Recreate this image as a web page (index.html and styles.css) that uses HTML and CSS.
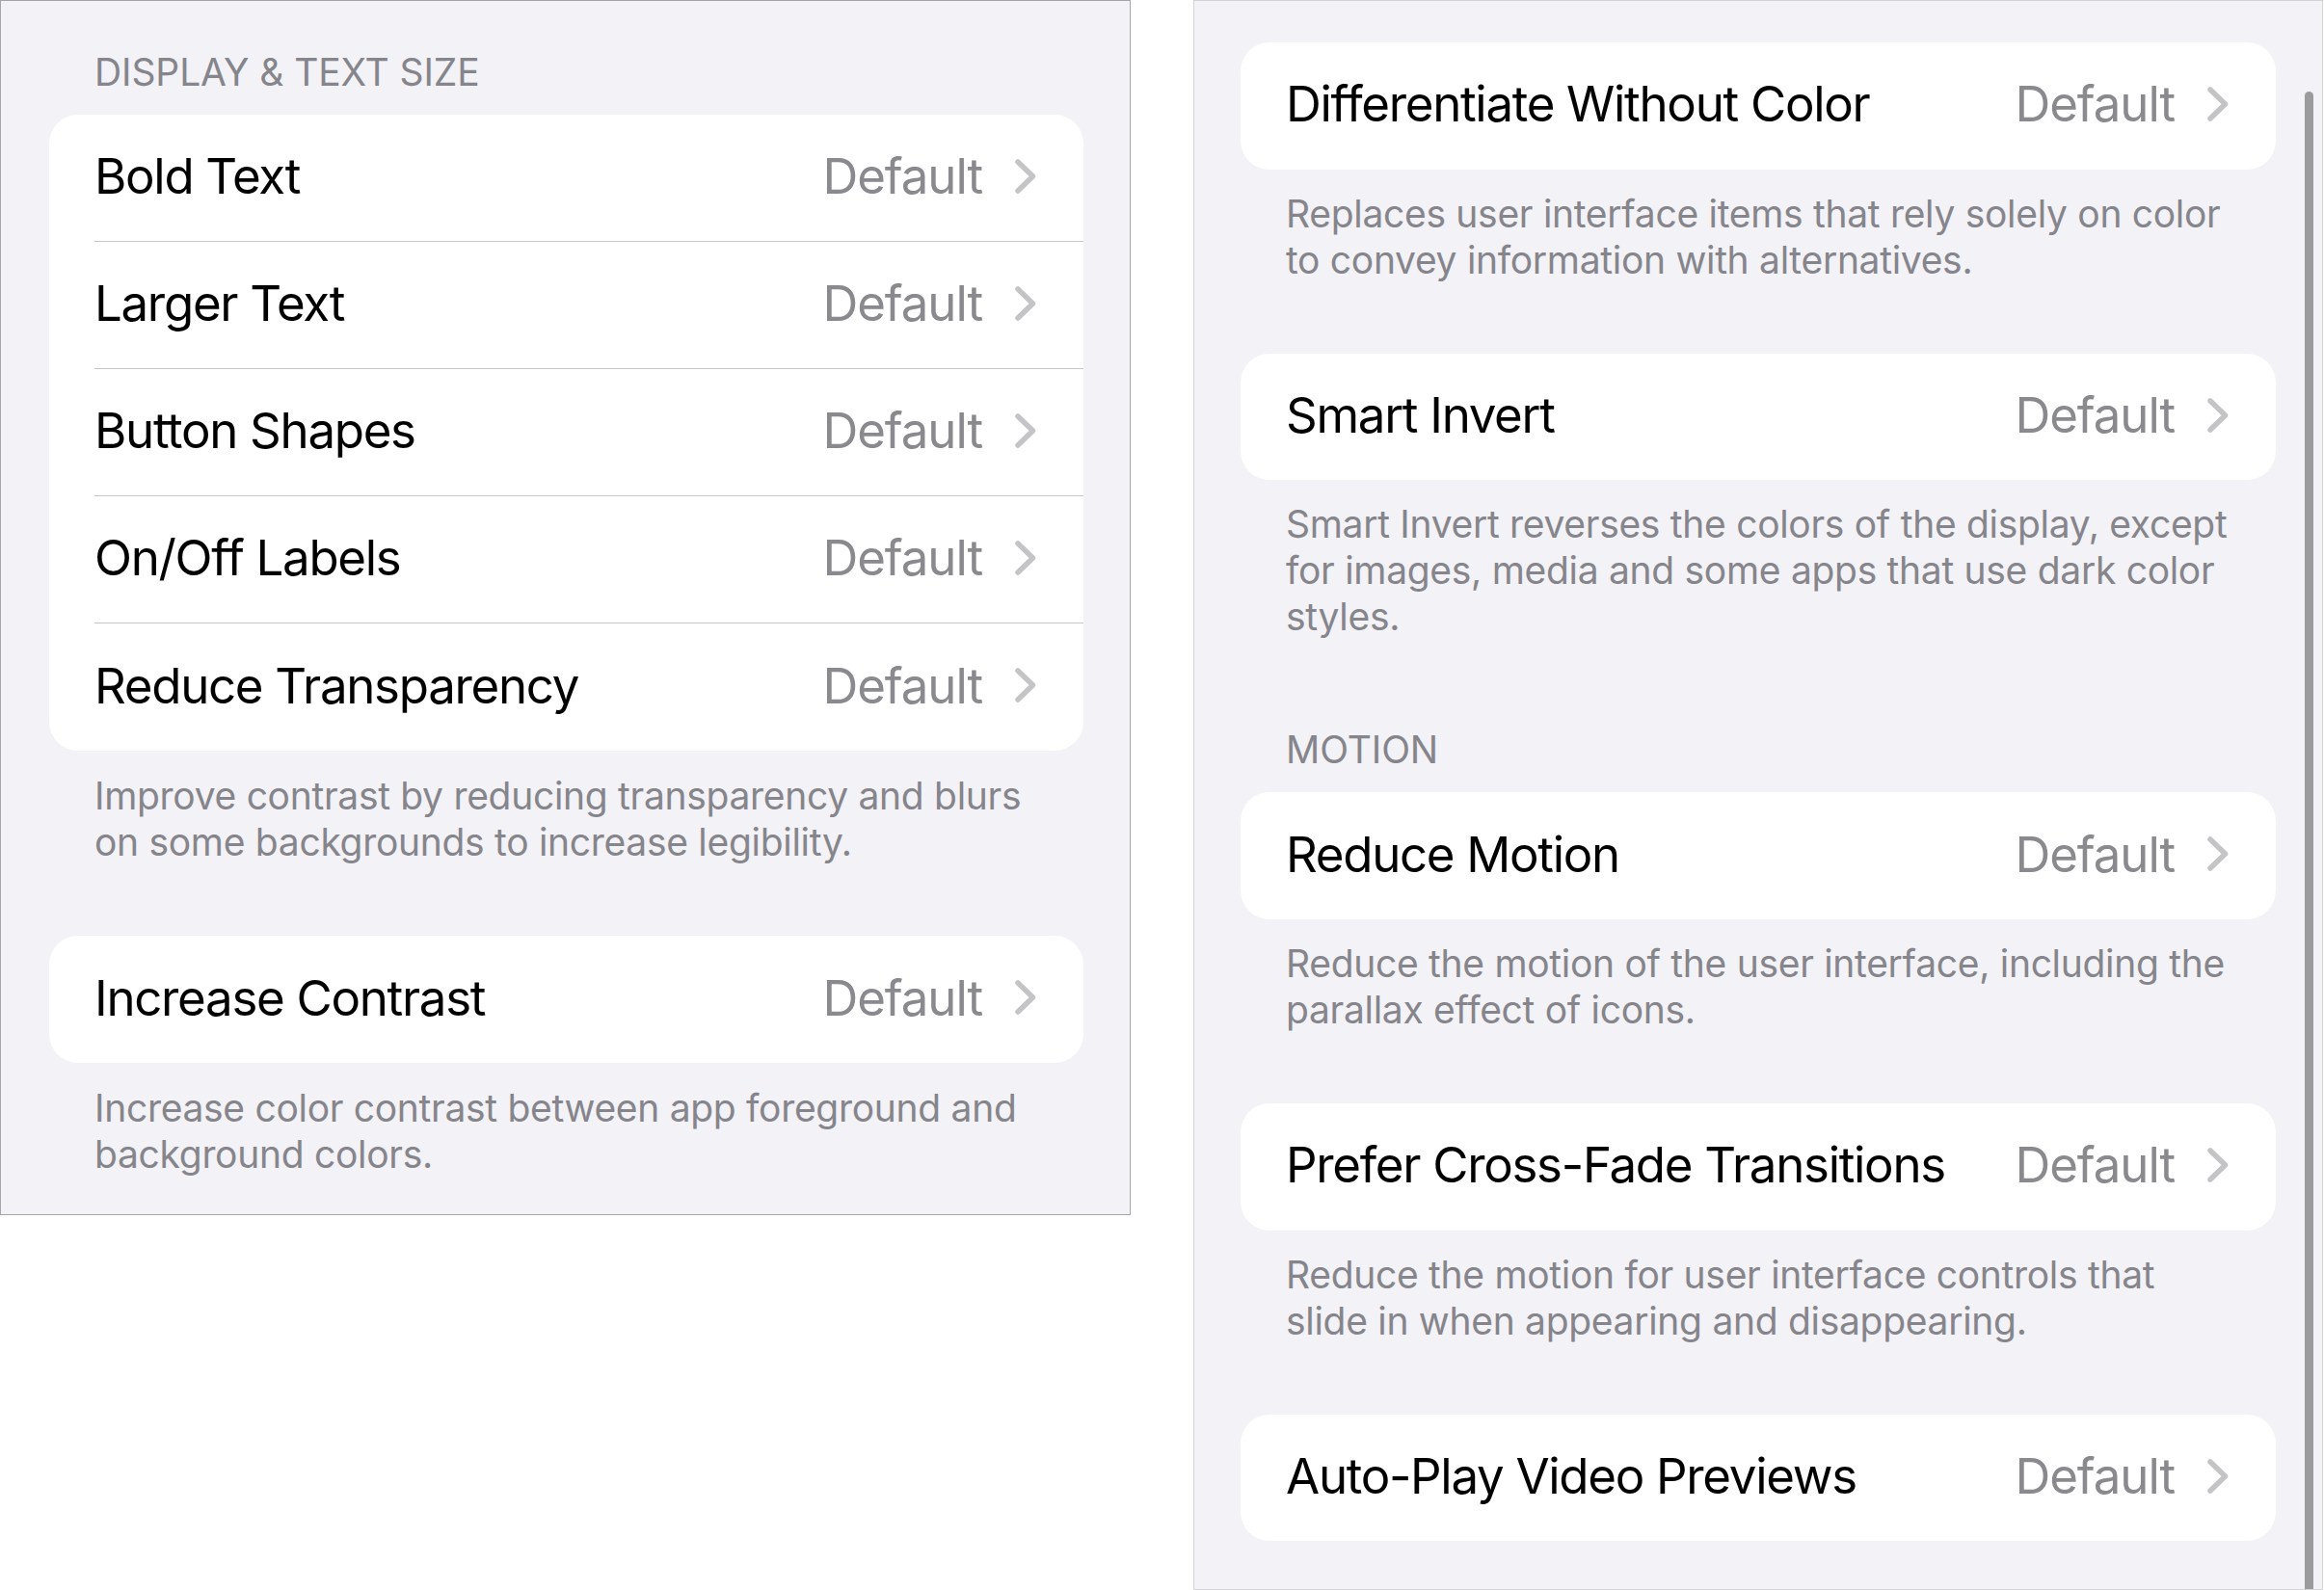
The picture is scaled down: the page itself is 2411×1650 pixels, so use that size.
FILE: index.html
```html
<!DOCTYPE html>
<html lang="en">
<head>
<meta charset="utf-8">
<title>Accessibility – Display &amp; Text Size</title>
<link rel="stylesheet" href="styles.css">
</head>
<body>
<div class="page">
  <section class="panel panel-left">
    <div class="group">
      <div class="group-header">DISPLAY &amp; TEXT SIZE</div>
      <div class="card">
        <div class="row"><div class="row-body"><span class="label">Bold Text</span><span class="value">Default</span><svg class="chev" viewBox="0 0 22 36" width="22" height="36"><path d="M3 3 L18.5 18 L3 33"/></svg></div></div>
        <div class="row"><div class="row-body"><span class="label">Larger Text</span><span class="value">Default</span><svg class="chev" viewBox="0 0 22 36" width="22" height="36"><path d="M3 3 L18.5 18 L3 33"/></svg></div></div>
        <div class="row"><div class="row-body"><span class="label">Button Shapes</span><span class="value">Default</span><svg class="chev" viewBox="0 0 22 36" width="22" height="36"><path d="M3 3 L18.5 18 L3 33"/></svg></div></div>
        <div class="row"><div class="row-body"><span class="label">On/Off Labels</span><span class="value">Default</span><svg class="chev" viewBox="0 0 22 36" width="22" height="36"><path d="M3 3 L18.5 18 L3 33"/></svg></div></div>
        <div class="row"><div class="row-body"><span class="label">Reduce Transparency</span><span class="value">Default</span><svg class="chev" viewBox="0 0 22 36" width="22" height="36"><path d="M3 3 L18.5 18 L3 33"/></svg></div></div>
      </div>
      <div class="group-footer">Improve contrast by reducing transparency and blurs<br>on some backgrounds to increase legibility.</div>
    </div>
    <div class="group">
      <div class="card">
        <div class="row"><div class="row-body"><span class="label">Increase Contrast</span><span class="value">Default</span><svg class="chev" viewBox="0 0 22 36" width="22" height="36"><path d="M3 3 L18.5 18 L3 33"/></svg></div></div>
      </div>
      <div class="group-footer">Increase color contrast between app foreground and<br>background colors.</div>
    </div>
  </section>

  <section class="panel panel-right">
    <div class="group">
      <div class="card">
        <div class="row"><div class="row-body"><span class="label">Differentiate Without Color</span><span class="value">Default</span><svg class="chev" viewBox="0 0 22 36" width="22" height="36"><path d="M3 3 L18.5 18 L3 33"/></svg></div></div>
      </div>
      <div class="group-footer">Replaces user interface items that rely solely on color<br>to convey information with alternatives.</div>
    </div>
    <div class="group">
      <div class="card">
        <div class="row"><div class="row-body"><span class="label">Smart Invert</span><span class="value">Default</span><svg class="chev" viewBox="0 0 22 36" width="22" height="36"><path d="M3 3 L18.5 18 L3 33"/></svg></div></div>
      </div>
      <div class="group-footer">Smart Invert reverses the colors of the display, except<br>for images, media and some apps that use dark color<br>styles.</div>
    </div>
    <div class="group with-header">
      <div class="group-header">MOTION</div>
      <div class="card">
        <div class="row"><div class="row-body"><span class="label">Reduce Motion</span><span class="value">Default</span><svg class="chev" viewBox="0 0 22 36" width="22" height="36"><path d="M3 3 L18.5 18 L3 33"/></svg></div></div>
      </div>
      <div class="group-footer">Reduce the motion of the user interface, including the<br>parallax effect of icons.</div>
    </div>
    <div class="group">
      <div class="card">
        <div class="row"><div class="row-body"><span class="label">Prefer Cross-Fade Transitions</span><span class="value">Default</span><svg class="chev" viewBox="0 0 22 36" width="22" height="36"><path d="M3 3 L18.5 18 L3 33"/></svg></div></div>
      </div>
      <div class="group-footer">Reduce the motion for user interface controls that<br>slide in when appearing and disappearing.</div>
    </div>
    <div class="group">
      <div class="card">
        <div class="row"><div class="row-body"><span class="label">Auto-Play Video Previews</span><span class="value">Default</span><svg class="chev" viewBox="0 0 22 36" width="22" height="36"><path d="M3 3 L18.5 18 L3 33"/></svg></div></div>
      </div>
    </div>
    <div class="scrollbar"></div>
  </section>
</div>
</body>
</html>
```

FILE: styles.css
```css
* { box-sizing: border-box; }

body {
  margin: 0;
  background: #ffffff;
  font-family: Inter, "Noto Sans", "Liberation Sans", sans-serif;
  -webkit-font-smoothing: antialiased;
}

.page {
  display: flex;
  align-items: flex-start;
  gap: 65px;
}

.panel {
  background: #f2f2f7;
}

.panel-left {
  width: 1173px;
  border: 1px solid #a5a5a5;
  padding: 50px 48px 38px 50px;
}

.panel-left .row { height: 132px; }
.panel-left .group-footer { padding-top: 23px; }

.panel-right {
  position: relative;
  width: 1172px;
  height: 1650px;
  border: 1px solid #d3d3d6;
  padding: 43px 48px 0 48px;
  overflow: hidden;
}

.group + .group { margin-top: 73px; }
.group + .group.with-header { margin-top: 90px; }

.group-header {
  padding-left: 47px;
  margin-bottom: 20px;
  font-size: 39px;
  line-height: 48px;
  color: #85858b;
  letter-spacing: -0.1px;
}

.group-footer {
  padding: 22px 47px 0 47px;
  font-size: 39px;
  line-height: 48px;
  color: #85858b;
  letter-spacing: -0.3px;
  white-space: nowrap;
}

.card {
  background: #ffffff;
  border-radius: 30px;
  overflow: hidden;
}

.row {
  height: 131.7px;
  padding-left: 47px;
}

.row-body {
  display: flex;
  align-items: center;
  height: 100%;
  padding-right: 49px;
  padding-bottom: 4px;
  border-bottom: 1px solid #c6c6c8;
}

.row:last-child .row-body { border-bottom: none; }

.label {
  flex: 1;
  font-size: 51px;
  color: #000000;
  letter-spacing: -1.3px;
  white-space: nowrap;
}

.value {
  font-size: 51px;
  color: #8a8a8e;
  letter-spacing: -1.1px;
  margin-right: 34px;
}

.chev {
  flex: none;
  fill: none;
  stroke: #c4c4c7;
  stroke-width: 5.5;
  stroke-linecap: round;
  stroke-linejoin: round;
}

.scrollbar {
  position: absolute;
  top: 94px;
  right: 9px;
  width: 9px;
  height: 1600px;
  border-radius: 5px;
  background: #9b9b9b;
}
```
